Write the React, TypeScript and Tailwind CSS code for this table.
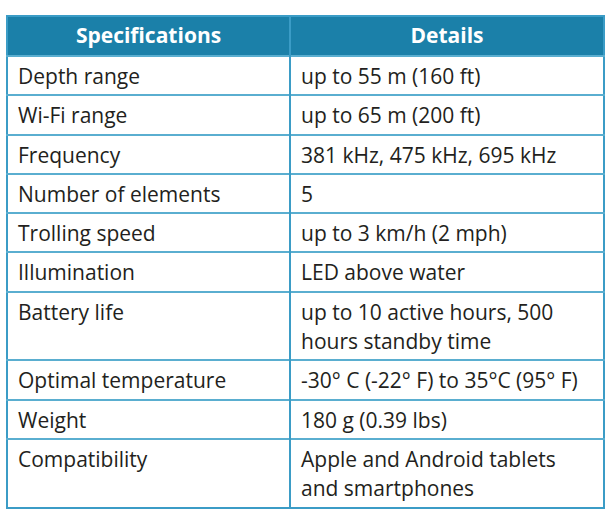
const rows: [string, string[]][] = [
  ["Depth range", ["up to 55 m (160 ft)"]],
  ["Wi-Fi range", ["up to 65 m (200 ft)"]],
  ["Frequency", ["381 kHz, 475 kHz, 695 kHz"]],
  ["Number of elements", ["5"]],
  ["Trolling speed", ["up to 3 km/h (2 mph)"]],
  ["Illumination", ["LED above water"]],
  ["Battery life", ["up to 10 active hours, 500", "hours standby time"]],
  ["Optimal temperature", ["-30° C (-22° F) to 35°C (95° F)"]],
  ["Weight", ["180 g (0.39 lbs)"]],
  ["Compatibility", ["Apple and Android tablets", "and smartphones"]],
];

export default function App() {
  return (
    <div className="min-h-screen bg-white pt-[15px] pl-[6px] font-['Open_Sans',sans-serif] text-[#231f20]">
      <table className="w-[599px] border-collapse border-2 border-[#3b9cc6] text-[21px] leading-[29.3px]">
        <thead>
          <tr className="bg-[#1b80a9] text-white">
            <th className="w-[283px] h-[40px] border-r-2 border-[#3b9cc6] text-center font-bold">Specifications</th>
            <th className="h-[40px] text-center font-bold">Details</th>
          </tr>
        </thead>
        <tbody>
          {rows.map(([label, lines]) => (
            <tr key={label} className="border-t-2 border-[#5aaed0]">
              <td className="align-top border-r-2 border-[#3b9cc6] pl-[10px] pt-[5px] pb-[3px]">{label}</td>
              <td className="align-top pl-[10px] pt-[5px] pb-[3px]">
                {lines.map((l) => (
                  <div key={l}>{l}</div>
                ))}
              </td>
            </tr>
          ))}
        </tbody>
      </table>
    </div>
  );
}
